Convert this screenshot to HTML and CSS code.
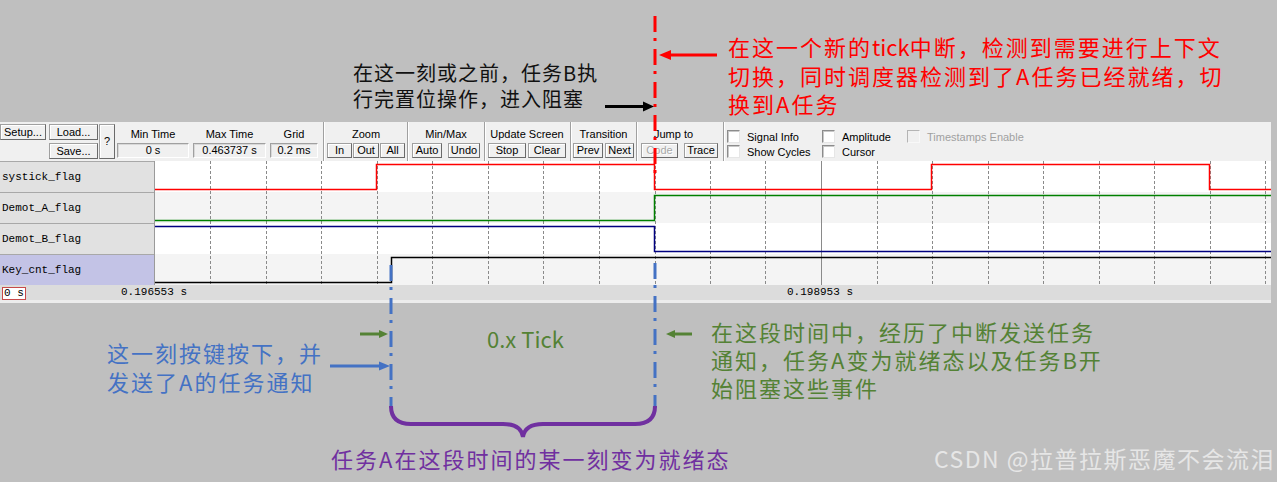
FILE: index.html
```html
<!DOCTYPE html>
<html lang="zh">
<head>
<meta charset="utf-8">
<title>Logic Analyzer</title>
<link rel="stylesheet" href="styles.css">
</head>
<body>
<div class="page">
  <div class="top-area"></div>
  <div class="scope">
    <div class="toolbar">
      <div class="file-group">
        <div class="btn setup">Setup...</div>
        <div class="btn load">Load...</div>
        <div class="btn save">Save...</div>
        <div class="btn help">?</div>
      </div>
      <div class="vgroup g-min"><div class="glabel">Min Time</div><div class="vbox">0 s</div></div>
      <div class="vgroup g-max"><div class="glabel">Max Time</div><div class="vbox">0.463737 s</div></div>
      <div class="vgroup g-grid"><div class="glabel">Grid</div><div class="vbox">0.2 ms</div></div>
      <div class="sep s1"></div>
      <div class="bgroup g-zoom">
        <div class="glabel">Zoom</div>
        <div class="brow gap1"><div class="btn w25">In</div><div class="btn w26">Out</div><div class="btn w25">All</div></div>
      </div>
      <div class="sep s2"></div>
      <div class="bgroup g-minmax">
        <div class="glabel">Min/Max</div>
        <div class="brow gap6"><div class="btn w30">Auto</div><div class="btn w32">Undo</div></div>
      </div>
      <div class="sep s3"></div>
      <div class="bgroup g-update">
        <div class="glabel">Update Screen</div>
        <div class="brow gap2"><div class="btn w38">Stop</div><div class="btn w38">Clear</div></div>
      </div>
      <div class="sep s4"></div>
      <div class="bgroup g-trans">
        <div class="glabel">Transition</div>
        <div class="brow gap2"><div class="btn w30">Prev</div><div class="btn w29">Next</div></div>
      </div>
      <div class="sep s5"></div>
      <div class="bgroup g-jump">
        <div class="glabel left">Jump to</div>
        <div class="brow gap6"><div class="btn w37 disabled">Code</div><div class="btn w34">Trace</div></div>
      </div>
      <div class="sep s6"></div>
      <div class="checks">
        <div class="ccol c1">
          <div class="chk"><span class="box"></span>Signal Info</div>
          <div class="chk"><span class="box"></span>Show Cycles</div>
        </div>
        <div class="ccol c2">
          <div class="chk"><span class="box"></span>Amplitude</div>
          <div class="chk"><span class="box"></span>Cursor</div>
        </div>
        <div class="ccol c3">
          <div class="chk off"><span class="box"></span>Timestamps Enable</div>
        </div>
      </div>
    </div>

    <div class="waves">
      <div class="names">
        <div class="name">systick_flag</div>
        <div class="name">Demot_A_flag</div>
        <div class="name">Demot_B_flag</div>
        <div class="name sel">Key_cnt_flag</div>
      </div>
      <svg class="plot" width="1116" height="124" viewBox="0 0 1116 124">
        <rect x="0" y="0" width="1116" height="31" fill="#ffffff"/>
        <rect x="0" y="31" width="1116" height="31" fill="#f4f4f4"/>
        <rect x="0" y="62" width="1116" height="31" fill="#ffffff"/>
        <rect x="0" y="93" width="1116" height="31" fill="#f4f4f4"/>
        <g stroke="#8a8a8a" stroke-width="1" stroke-dasharray="3 2">
          <line x1="55.5" y1="0" x2="55.5" y2="124"/>
          <line x1="111.5" y1="0" x2="111.5" y2="124"/>
          <line x1="166.5" y1="0" x2="166.5" y2="124"/>
          <line x1="222.5" y1="0" x2="222.5" y2="124"/>
          <line x1="277.5" y1="0" x2="277.5" y2="124"/>
          <line x1="333.5" y1="0" x2="333.5" y2="124"/>
          <line x1="388.5" y1="0" x2="388.5" y2="124"/>
          <line x1="444.5" y1="0" x2="444.5" y2="124"/>
          <line x1="500.5" y1="0" x2="500.5" y2="124"/>
          <line x1="555.5" y1="0" x2="555.5" y2="124"/>
          <line x1="610.5" y1="0" x2="610.5" y2="124"/>
          <line x1="722.5" y1="0" x2="722.5" y2="124"/>
          <line x1="777.5" y1="0" x2="777.5" y2="124"/>
          <line x1="833.5" y1="0" x2="833.5" y2="124"/>
          <line x1="888.5" y1="0" x2="888.5" y2="124"/>
          <line x1="944.5" y1="0" x2="944.5" y2="124"/>
          <line x1="999.5" y1="0" x2="999.5" y2="124"/>
          <line x1="1055.5" y1="0" x2="1055.5" y2="124"/>
          <line x1="1110.5" y1="0" x2="1110.5" y2="124"/>
        </g>
        <line x1="666.5" y1="0" x2="666.5" y2="124" stroke="#8a8a8a" stroke-width="1"/>
        <g fill="none" stroke-width="1.5">
          <path d="M0 28.5 H221.5 V3.5 H499.5 V28.5 H776.5 V3.5 H1054.5 V28.5 H1116" stroke="#ff0000"/>
          <path d="M0 59.5 H499.5 V34.5 H1116" stroke="#008000"/>
          <path d="M0 65.5 H499.5 V90.5 H1116" stroke="#000080"/>
          <path d="M0 121.5 H236.5 V96.5 H1116" stroke="#000000"/>
        </g>
      </svg>
    </div>

    <div class="timebar">
      <span class="t0">0 s</span>
      <span class="tl tl1">0.196553 s</span>
      <span class="tl tl2">0.198953 s</span>
    </div>
    <div class="scrollstrip"></div>
  </div>

  <svg class="overlay" width="1277" height="482" viewBox="0 0 1277 482">
    <line x1="655" y1="16" x2="655" y2="173" stroke="#ff0000" stroke-width="3" stroke-dasharray="16 6 3 8"/>
    <line x1="717" y1="55" x2="669" y2="55" stroke="#ff0000" stroke-width="3"/>
    <polygon points="659,55 671,50 671,60" fill="#ff0000"/>
    <line x1="605" y1="106.5" x2="644" y2="106.5" stroke="#000000" stroke-width="3"/>
    <polygon points="654,106.5 643,101.5 643,111.5" fill="#000000"/>

    <line x1="391" y1="265" x2="391" y2="408" stroke="#4472c4" stroke-width="3" stroke-dasharray="16 6 3 8"/>
    <line x1="655" y1="263" x2="655" y2="408" stroke="#4472c4" stroke-width="3" stroke-dasharray="16 6 3 8"/>
    <line x1="330" y1="366" x2="380" y2="366" stroke="#4472c4" stroke-width="3"/>
    <polygon points="390,366 379,361.5 379,370.5" fill="#4472c4"/>

    <line x1="360" y1="334" x2="380" y2="334" stroke="#548235" stroke-width="3"/>
    <polygon points="388,334 379,330 379,338" fill="#548235"/>
    <line x1="692" y1="334" x2="674" y2="334" stroke="#548235" stroke-width="3"/>
    <polygon points="666,334 675,330 675,338" fill="#548235"/>

    <path d="M391 406 Q391 424 411 424 L503 424 Q521 424 523 437 Q525 424 543 424 L635 424 Q655 424 655 406" fill="none" stroke="#7030a0" stroke-width="4"/>
  </svg>

  <div class="note note-red">在这一个新的<span class="latin">tick</span>中断，检测到需要进行上下文<br>切换，同时调度器检测到了A任务已经就绪，切<br>换到A任务</div>
  <div class="note note-black">在这一刻或之前，任务B执<br>行完置位操作，进入阻塞</div>
  <div class="note note-blue">这一刻按键按下，并<br>发送了A的任务通知</div>
  <div class="note note-tick">0.x Tick</div>
  <div class="note note-green">在这段时间中，经历了中断发送任务<br>通知，任务A变为就绪态以及任务B开<br>始阻塞这些事件</div>
  <div class="note note-purple">任务A在这段时间的某一刻变为就绪态</div>
  <div class="note note-mark">CSDN @拉普拉斯恶魔不会流泪</div>
</div>
</body>
</html>
```

FILE: styles.css
```css
* {
  box-sizing: border-box;
}

html,
body {
  margin: 0;
  padding: 0;
}

body {
  width: 1277px;
  height: 482px;
  overflow: hidden;
  background: #bfbfbf;
  font-family: "Liberation Sans", Arial, sans-serif;
  font-size: 11px;
  color: #000;
}

.page {
  position: relative;
  width: 1277px;
  height: 482px;
}

.top-area {
  height: 122px;
}

.scope {
  width: 1271px;
}

/* ---------- toolbar ---------- */
.toolbar {
  display: flex;
  align-items: flex-start;
  height: 39px;
  background: #f0f0f0;
}

.btn {
  height: 16px;
  line-height: 14px;
  text-align: center;
  white-space: nowrap;
  background: #f0f0f0;
  border: 1px solid #a0a0a0;
  border-right-color: #6a6a6a;
  border-bottom-color: #6a6a6a;
  box-shadow: inset 1px 1px #ffffff;
}

.btn.disabled {
  color: #a8a8a8;
  text-shadow: 1px 1px #ffffff;
}

.file-group {
  display: grid;
  grid-template-columns: 48px 49px 16px;
  grid-template-rows: 16px 16px;
  column-gap: 1px;
  row-gap: 3px;
  padding-top: 2px;
}

.setup {
  grid-column: 1;
  grid-row: 1;
  width: 46px;
}

.load {
  grid-column: 2;
  grid-row: 1;
}

.save {
  grid-column: 2;
  grid-row: 2;
}

.help {
  grid-column: 3;
  grid-row: 1 / span 2;
  height: 35px;
  line-height: 33px;
}

.vgroup,
.bgroup {
  display: flex;
  flex-direction: column;
}

.glabel {
  height: 21px;
  padding-top: 6px;
  line-height: 13px;
  text-align: center;
  white-space: nowrap;
}

.glabel.left {
  text-align: left;
  padding-left: 13px;
}

.vbox {
  height: 15px;
  line-height: 13px;
  text-align: center;
  white-space: nowrap;
  background: #f0f0f0;
  border: 1px solid;
  border-color: #a0a0a0 #ffffff #ffffff #a0a0a0;
  box-shadow: inset 1px 1px #d8d8d8;
}

.g-min {
  margin-left: 2px;
  width: 72px;
}

.g-max {
  margin-left: 4px;
  width: 73px;
}

.g-grid {
  margin-left: 4px;
  width: 48px;
}

.sep {
  width: 2px;
  height: 39px;
  border-left: 1px solid #a0a0a0;
  border-right: 1px solid #ffffff;
}

.s1 { margin-left: 5px; }
.s2 { margin-left: 2px; }
.s3 { margin-left: 4px; }
.s4 { margin-left: 4px; }
.s5 { margin-left: 2px; }
.s6 { margin-left: 5px; }

.brow {
  display: flex;
}

.brow .btn {
  height: 15px;
  line-height: 13px;
}

.gap1 { gap: 1px; }
.gap2 { gap: 2px; }
.gap6 { gap: 6px; }

.w25 { width: 25px; }
.w26 { width: 26px; }
.w29 { width: 29px; }
.w30 { width: 30px; }
.w32 { width: 32px; }
.w34 { width: 34px; }
.w37 { width: 37px; }
.w38 { width: 38px; }

.g-zoom { margin-left: 2px; }
.g-minmax { margin-left: 3px; }
.g-update { margin-left: 2px; }
.g-trans { margin-left: 1px; }
.g-jump { margin-left: 3px; }

.checks {
  display: flex;
  margin-left: 2px;
  padding-top: 8px;
}

.ccol {
  display: flex;
  flex-direction: column;
  gap: 2px;
}

.c1 { width: 95px; }
.c2 { width: 85px; }

.chk {
  display: flex;
  align-items: center;
  height: 13px;
  white-space: nowrap;
}

.box {
  width: 13px;
  height: 13px;
  margin-right: 7px;
  background: #ffffff;
  border: 1px solid;
  border-color: #8c8c8c #e6e6e6 #e6e6e6 #8c8c8c;
  box-shadow: inset 1px 1px #c8c8c8;
}

.chk.off {
  color: #a0a0a0;
}

.chk.off .box {
  background: #f0f0f0;
  border-color: #b4b4b4 #f8f8f8 #f8f8f8 #b4b4b4;
  box-shadow: none;
}

/* ---------- waveform area ---------- */
.waves {
  display: flex;
  height: 124px;
}

.names {
  width: 155px;
  border-right: 1px solid #9a9a9a;
}

.name {
  height: 31px;
  line-height: 30px;
  padding-left: 2px;
  background: #e1e1e1;
  border-top: 1px solid #a8a8a8;
  font-family: "Liberation Mono", "DejaVu Sans Mono", monospace;
  font-size: 11px;
  white-space: nowrap;
}

.name.sel {
  background: #c3c3e6;
}

.plot {
  display: block;
}

/* ---------- time bar ---------- */
.timebar {
  display: flex;
  height: 15px;
  background: #dcdcdc;
  font-family: "Liberation Mono", "DejaVu Sans Mono", monospace;
  font-size: 11px;
  line-height: 15px;
  white-space: nowrap;
}

.t0 {
  margin: 2px 0 0 2px;
  width: 24px;
  height: 13px;
  line-height: 11px;
  padding-left: 1px;
  background: #ffffff;
  border: 1px solid #c84a4a;
}

.tl {
  width: 66px;
}

.tl1 { margin-left: 95px; }
.tl2 { margin-left: 600px; }

.scrollstrip {
  height: 3px;
  background: #ececec;
}

/* ---------- annotations ---------- */
.overlay {
  position: absolute;
  left: 0;
  top: 0;
  pointer-events: none;
}

.note {
  position: absolute;
  font-family: "Noto Sans CJK SC", "Noto Sans", sans-serif;
  font-size: 22px;
  letter-spacing: 2px;
  white-space: nowrap;
}

.latin {
  letter-spacing: 0;
}

.note-red {
  left: 728px;
  top: 32px;
  line-height: 28.5px;
  color: #ff0000;
}

.note-black {
  left: 353px;
  top: 60px;
  font-size: 20px;
  letter-spacing: 1px;
  line-height: 25.5px;
  color: #111111;
}

.note-blue {
  left: 107px;
  top: 338px;
  line-height: 29px;
  color: #4472c4;
}

.note-tick {
  left: 487px;
  top: 323px;
  line-height: 30px;
  letter-spacing: 0;
  color: #548235;
}

.note-green {
  left: 711px;
  top: 317px;
  line-height: 28px;
  color: #548235;
}

.note-purple {
  left: 331px;
  top: 444px;
  line-height: 29px;
  color: #7030a0;
}

.note-mark {
  left: 934px;
  top: 443px;
  font-size: 23px;
  line-height: 30px;
  letter-spacing: 1.5px;
  color: #e6e6e6;
}
```
